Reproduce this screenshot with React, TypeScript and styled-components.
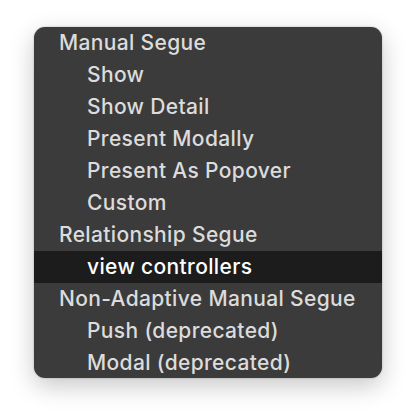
import styled, { createGlobalStyle } from "styled-components";

const GlobalStyle = createGlobalStyle`
  html, body {
    margin: 0;
    padding: 0;
    background: #ffffff;
  }
`;

const Page = styled.div`
  width: 416px;
  height: 420px;
  padding: 27px 0 0 34px;
  box-sizing: border-box;
`;

const Menu = styled.ul`
  list-style: none;
  margin: 0;
  padding: 0;
  width: 348px;
  height: 351px;
  background: #3b3b3b;
  border-radius: 11px;
  overflow: hidden;
  box-shadow: 0 8px 24px rgba(0, 0, 0, 0.22), 0 0 2px rgba(0, 0, 0, 0.25);
  font-family: Inter, "Liberation Sans", sans-serif;
  font-size: 21px;
  font-weight: 500;
  letter-spacing: 0.35px;
`;

const Item = styled.li<{ $level: number; $selected?: boolean }>`
  height: 32px;
  display: flex;
  align-items: center;
  padding-left: ${(p) => (p.$level === 0 ? 25 : 53)}px;
  padding-bottom: 2px;
  box-sizing: border-box;
  color: ${(p) => (p.$selected ? "#ffffff" : "#dcdcdc")};
  background: ${(p) => (p.$selected ? "#1c1c1c" : "transparent")};
  white-space: nowrap;
`;

const items: { label: string; level: number; selected?: boolean }[] = [
  { label: "Manual Segue", level: 0 },
  { label: "Show", level: 1 },
  { label: "Show Detail", level: 1 },
  { label: "Present Modally", level: 1 },
  { label: "Present As Popover", level: 1 },
  { label: "Custom", level: 1 },
  { label: "Relationship Segue", level: 0 },
  { label: "view controllers", level: 1, selected: true },
  { label: "Non-Adaptive Manual Segue", level: 0 },
  { label: "Push (deprecated)", level: 1 },
  { label: "Modal (deprecated)", level: 1 },
];

export default function App() {
  return (
    <>
      <GlobalStyle />
      <Page>
        <Menu>
          {items.map((it) => (
            <Item key={it.label} $level={it.level} $selected={it.selected}>
              {it.label}
            </Item>
          ))}
        </Menu>
      </Page>
    </>
  );
}
